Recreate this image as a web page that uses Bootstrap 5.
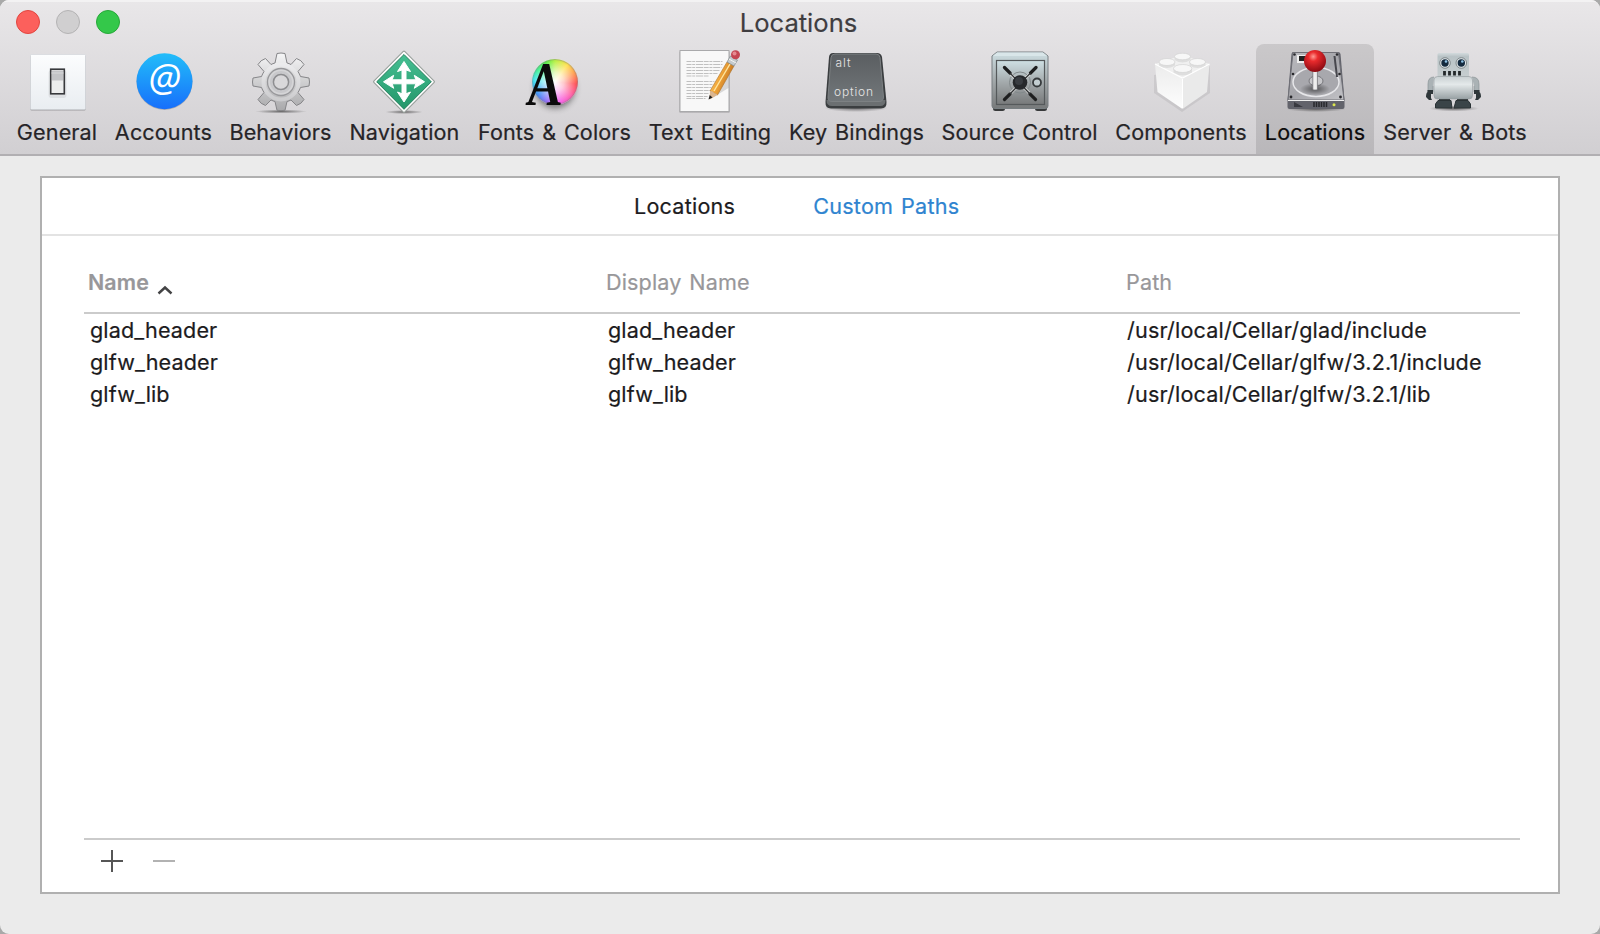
<!DOCTYPE html>
<html lang="en">
<head>
<meta charset="utf-8">
<title>Locations</title>
<link href="https://cdn.jsdelivr.net/npm/bootstrap@5.3.0/dist/css/bootstrap.min.css" rel="stylesheet">
<style>
body{background:#a9a9a9;font-family:Inter,"Liberation Sans",sans-serif;font-size:21.6px;line-height:32px;color:#262427;overflow:hidden;letter-spacing:.12px;word-spacing:1.6px;-webkit-text-stroke:.2px}
.window{height:934px;background:#ebebeb;border-radius:9px;overflow:hidden}
.titlebar{height:156px;background:linear-gradient(#e9e7e9,#d1cfd2);border-bottom:2px solid #b1afb2;box-shadow:inset 0 2px #f3f2f3}
.title-row{height:44px}
.light{width:24px;height:24px;border-radius:50%;border:1px solid}
.light-red{background:#fc605c;border-color:#e2453f}
.light-off{background:#d0cfd0;border-color:#b4b3b4}
.light-green{background:#34c84a;border-color:#27a839}
.win-title{font-size:25.6px;color:#3f3d40;padding:2px 3px 0 0;letter-spacing:0}
.tools{height:110px;display:grid;grid-template-columns:98px 115px 119px 129px 171px 140px 153px 173px 150px 118px 162px;padding-left:8px}
.tool{padding-top:6px;white-space:nowrap;border-radius:8px 8px 0 0}
.tool svg{width:64px;height:64px;overflow:visible;display:block}
.tool svg text{-webkit-text-stroke:0;letter-spacing:0}
.tool-label{line-height:36px}
.tool.active{background:linear-gradient(#cac8ca,#b9b7ba);color:#0c0b0c}
.wheel{width:64px;height:64px}
.wheel-disc{width:46px;height:46px;margin:9px 0 0 9px;border-radius:50%;background:radial-gradient(circle,#fff 0,#ffffffb0 28%,#fff0 68%),conic-gradient(#b4f03c,#ffe04a 35deg,#ff9a4a 65deg,#ff4a50 95deg,#ff5aa8 130deg,#f55af0 170deg,#8a6af8 205deg,#3a8cf8 235deg,#3ae4f0 275deg,#3cf090 305deg,#50ec40 335deg,#b4f03c);box-shadow:inset 0 0 1px 1px #8888,0 6px 6px -3px #0007}
.wheel-a{position:absolute;left:6px;top:2px;font:italic bold 62px/64px "Liberation Serif",serif;color:#0b0b0b;transform:scaleX(.84) skewX(4deg);transform-origin:0 100%;-webkit-text-stroke:0}
.panel{margin:20px 40px 0;height:718px;border:2px solid #b0b0b0;background:#fff}
.tabs-row{height:58px;border-bottom:2px solid #e3e3e3;padding-left:592px;gap:78px;color:#1d1c1e;letter-spacing:.22px}
.tab-on{color:#2f84d0}
.paths{margin:0 38px 0 42px}
.cols{display:grid;grid-template-columns:518px 520px 1fr;white-space:nowrap}
.heads{height:78px;padding:14px 0 0 4px;line-height:64px;color:#98979a;border-bottom:2px solid #cbcbcb}
.heads .sorted{font-weight:600;font-size:21.4px}
.rows{height:526px;padding:0 0 0 6px;color:#1c1b1d;border-bottom:2px solid #cbcbcb}
.rows .cols{height:32px}
.rows .cols>:last-child{letter-spacing:.17px;margin-left:-1px}
</style>
</head>
<body>
<svg width="0" height="0" class="position-absolute">
<defs>
<linearGradient id="plate" x2="0" y2="1"><stop stop-color="#fcfdfe"/><stop offset="1" stop-color="#e9edf1"/></linearGradient>
<linearGradient id="blue" x2="0" y2="1"><stop stop-color="#22bdf9"/><stop offset="1" stop-color="#176ffb"/></linearGradient>
<linearGradient id="steel" x2="0" y2="1"><stop stop-color="#f6f6f7"/><stop offset="1" stop-color="#a9a9ab"/></linearGradient>
<linearGradient id="green" x2="0" y2="1"><stop stop-color="#45bf92"/><stop offset="1" stop-color="#24966a"/></linearGradient>
<linearGradient id="safe" x2="0" y2="1"><stop stop-color="#cfe0e4"/><stop offset=".5" stop-color="#a3a9ab"/><stop offset="1" stop-color="#77797a"/></linearGradient>
<linearGradient id="key" x2="0" y2="1"><stop stop-color="#5a5e61"/><stop offset="1" stop-color="#72777a"/></linearGradient>
<linearGradient id="bot" x2="0" y2="1"><stop stop-color="#c9d0d2"/><stop offset=".35" stop-color="#e4e9ea"/><stop offset="1" stop-color="#98a1a4"/></linearGradient>
<linearGradient id="head" x2="0" y2="1"><stop stop-color="#d3dbdd"/><stop offset=".15" stop-color="#b9c3c6"/><stop offset="1" stop-color="#c6ced0"/></linearGradient>
<linearGradient id="disk" x2="1" y2="1"><stop stop-color="#bcbcc0"/><stop offset=".5" stop-color="#a5a5aa"/><stop offset="1" stop-color="#c2c2c6"/></linearGradient>
<radialGradient id="ball" cx=".42" cy=".3" r=".7"><stop stop-color="#ff9a93"/><stop offset=".3" stop-color="#ea2b2d"/><stop offset="1" stop-color="#8a0a12"/></radialGradient>
<radialGradient id="shade"><stop stop-color="#000" stop-opacity=".5"/><stop offset="1" stop-color="#000" stop-opacity="0"/></radialGradient>
<linearGradient id="pencil" x2="1" y2=".5"><stop stop-color="#ffd873"/><stop offset=".5" stop-color="#f2a73a"/><stop offset="1" stop-color="#b96a1b"/></linearGradient>
<linearGradient id="brickL" x2="0" y2="1"><stop stop-color="#ececec"/><stop offset="1" stop-color="#fdfdfd"/></linearGradient>
</defs>
</svg>
<div class="window d-flex flex-column">
  <header class="titlebar flex-shrink-0">
    <div class="title-row d-flex align-items-center position-relative">
      <div class="d-flex ps-3" style="gap:16px">
        <span class="light light-red"></span><span class="light light-off"></span><span class="light light-green"></span>
      </div>
      <div class="win-title position-absolute start-0 end-0 text-center">Locations</div>
    </div>
    <nav class="tools">
      <div class="tool d-flex flex-column align-items-center">
        <svg viewBox="0.5 0 64 64"><rect x="6" y="5.500" width="55" height="55" rx="1" fill="#0004"/><rect x="6" y="4.500" width="55" height="55" rx="1" fill="url(#plate)" stroke="#cfd2d6" stroke-width=".6"/><rect x="24" y="20" width="18" height="28" rx="3" fill="#0001"/><rect x="26.200" y="19.200" width="13.600" height="24.600" fill="#eceded" stroke="#38393c" stroke-width="1.600"/><rect x="27.500" y="20.500" width="11" height="10" fill="#c3c4c7"/><path d="M27 23h12" stroke="#d7d8da"/></svg>
        <div class="tool-label">General</div>
      </div>
      <div class="tool d-flex flex-column align-items-center">
        <svg viewBox="0 0 64 64"><circle cx="32.500" cy="32" r="28" fill="#0003"/><circle cx="32.500" cy="31.200" r="28" fill="url(#blue)"/><text x="32.500" y="42" text-anchor="middle" font-family="Open Sans" font-style="italic" font-size="38" fill="#fff">@</text></svg>
        <div class="tool-label">Accounts</div>
      </div>
      <div class="tool d-flex flex-column align-items-center">
        <svg viewBox="0 0 64 64"><ellipse cx="32" cy="61.500" rx="26" ry="2" fill="url(#shade)"/>
        <path fill="url(#steel)" stroke="#858588" stroke-width="1" stroke-linejoin="round" d="M26 13 28 3.500Q32 2.500 36 3.500L38 13Q40 13.500 42 14.500L47.500 8.500Q52.500 10 55 14.500L49 21.500Q50.500 24 51.500 26.500L60 28Q61 32 60 36L51.500 37.500Q50.500 40 49 42.500L55 49.500Q52.500 54 47.500 55.500L42 50Q40 51 38 51.500L36 60.300Q32 61 28 60.300L26 51.500Q24 51 22 50L16.500 55.500Q11.500 54 9 49.500L15 42.500Q13.500 40 12.500 37.500L4 36Q3 32 4 28L12.500 26.500Q13.500 24 15 21.500L9 14.500Q11.500 10 16.500 8.500L22 14.500Q24 13.500 26 13Z"/>
        <circle cx="32" cy="32" r="17.500" fill="none" stroke="#f4f4f5" stroke-width="4" opacity=".35"/><circle cx="32" cy="32" r="13.500" fill="#d5d5d7" stroke="#98989b" stroke-width="1.300"/><circle cx="32" cy="32" r="11" fill="#c8c8cb"/><circle cx="32" cy="32" r="7.600" fill="#d9d8da" stroke="#8d8d90" stroke-width="1.500"/></svg>
        <div class="tool-label">Behaviors</div>
      </div>
      <div class="tool d-flex flex-column align-items-center">
        <svg viewBox="1 0 64 64"><ellipse cx="32" cy="62" rx="19" ry="2" fill="url(#shade)"/><path d="M32 2 61.500 31.800 32 61.500 2.500 31.800Z" fill="#f7f8f7" stroke="#98a09c" stroke-width="3" stroke-linejoin="round"/><path d="M32 2.500 61 31.800 32 61 3 31.800Z" fill="#fff" stroke="#fff" stroke-width="1.500" stroke-linejoin="round"/><path d="M32 4.500 59.300 31.800 32 59.300 4.700 31.800Z" fill="url(#green)" stroke="#27815f"/><path d="M32 11.500 38.500 21.500 34 20V29.800H43.800L42.300 25.300 52.500 31.800 42.300 38.300 43.800 33.800H34V43.700L38.500 42 32 52 25.500 42 30 43.700V33.800H20.200L21.700 38.300 11.500 31.800 21.700 25.300 20.200 29.800H30V20L25.500 21.500Z" fill="#fff" stroke="#fff" stroke-linejoin="round"/></svg>
        <div class="tool-label">Navigation</div>
      </div>
      <div class="tool d-flex flex-column align-items-center">
        <div class="wheel position-relative overflow-visible d-flex"><div class="wheel-disc"></div><span class="wheel-a">A</span></div>
        <div class="tool-label">Fonts &amp; Colors</div>
      </div>
      <div class="tool d-flex flex-column align-items-center">
        <svg viewBox="0.5 0 64 64"><rect x="2" y="1.500" width="50" height="61" fill="#0004"/><rect x="2.500" y=".5" width="49" height="61" fill="#f8f8f8" stroke="#a9a9ab"/><path d="M9 11.500H45M9 14.500H45M9 17.500H44M9 20.500H42M9 23.500H40M9 26H31M9 31.500H37M9 34.500H35M9 37.500H34M9 40.500H33M9 43.500H31M9 46.500H30M9 48.500H28" stroke="#c0c0c0" stroke-width="1.200" stroke-dasharray="5 .7 3 .8 7 .7"/><path d="M33 49 51 38 51 26Z" fill="#0002"/><path d="M32.500 41 49.500 12 56.500 16 40 45Z" fill="url(#pencil)" stroke="#a9712c" stroke-width=".6"/><path d="M36.500 41 52.500 14" stroke="#ffe6a0" stroke-width="1.400"/><path d="M32.500 41Q36 41 36.500 43.200Q39 43 40 45L32 49.500Z" fill="#dbb690"/><path d="M32.200 45 31 49.500 35 47.500Z" fill="#222"/><path d="M49.500 12 53 6 60 10 56.500 16Z" fill="#c5cbce" stroke="#81898d" stroke-width=".7"/><path d="M51.500 9 58.500 13" stroke="#f5f6f6"/><circle cx="58" cy="4.800" r="4.500" fill="#c54652"/><circle cx="57" cy="3.500" r="2" fill="#e68a90"/></svg>
        <div class="tool-label">Text Editing</div>
      </div>
      <div class="tool d-flex flex-column align-items-center">
        <svg viewBox="1 0 64 64"><ellipse cx="32" cy="58" rx="32" ry="4" fill="url(#shade)"/><path d="M9 3H53Q57 3 58 7L62.500 52Q63 58.500 57 58.500H7Q1 58.500 1.500 52L5 7Q5.500 3 9 3Z" fill="#3b3e40"/><path d="M2.500 50H61.500Q61.500 56 56 56H8Q2.500 56 2.500 50Z" fill="#6b6f71"/><path d="M11 4H52Q55.500 4 56 7.500L59.500 47Q59.500 51.500 55 51.500H8Q3.500 51.500 4 47L7 7.500Q7.500 4 11 4Z" fill="url(#key)" stroke="#7d8183"/><g fill="#e6e6e6" font-family="Inter" font-weight="300" font-size="12"><text x="11.500" y="17" textLength="15">alt</text><text x="10" y="46" textLength="39">option</text></g></svg>
        <div class="tool-label">Key Bindings</div>
      </div>
      <div class="tool d-flex flex-column align-items-center">
        <svg viewBox="1 0 64 64"><rect x="6" y="55" width="12" height="6" rx="2.500" fill="#37393a"/><rect x="48" y="55" width="12" height="6" rx="2.500" fill="#37393a"/><path d="M10 2H56L61 6V56Q61 58.500 58 58.500H8Q5 58.500 5 56V6Z" fill="url(#safe)" stroke="#787f82"/><path d="M10 2.500H56L60 6H6Z" fill="#d9e6e9"/><rect x="9.500" y="10.500" width="48" height="44" fill="url(#safe)" stroke="#55595b" stroke-width="1.200"/><circle cx="33" cy="32.500" r="10.500" fill="none" stroke="#82898b"/><path d="M17.500 17.500 48.500 49.500M49 17.500 17.500 49.500" stroke="#ddd" stroke-width="2.800" stroke-linecap="round"/><path d="M17.500 17.500 23 23M49 17.500 43.500 23M48.500 49.500 43 44M17.500 49.500 23 44" stroke="#1d1e1f" stroke-width="3.200" stroke-linecap="round"/><path d="M23 23 43 44M43.500 23 23 44" stroke="#333638" stroke-width="1.300"/><circle cx="33" cy="32.500" r="7.300" fill="#26282b"/><circle cx="32" cy="31" r="4" fill="#393c41"/><circle cx="50" cy="32.500" r="4" fill="#c3ced1" stroke="#363a3c" stroke-width="1.800"/></svg>
        <div class="tool-label">Source Control</div>
      </div>
      <div class="tool d-flex flex-column align-items-center">
        <svg viewBox="0 0 64 64"><path d="M61 16 61 43 33 62 5 43 5 25Z" fill="#00000012"/><path d="M6 14 33.500 28V59L8.500 42Z" fill="url(#brickL)"/><path d="M60.500 14 33.500 28V59L58 42Z" fill="#eaeaea"/><path d="M6 14 33.500 5 60.500 14 33.500 28Z" fill="#f0f0f0"/><path d="M6 14 33.500 28 60.500 14" fill="none" stroke="#fff" stroke-width="1.200"/><path d="M33.500 29V58" stroke="#fff" stroke-width="1"/><g fill="#dedede"><path d="M25.500 6v4q8 5 16 0V6Z"/><path d="M10 11.500v4q8 5 16 0v-4ZM40.500 11.500v4q8 5 16 0v-4Z"/><path d="M24.500 18.500v4q9 6 18.500 0v-4Z"/></g><g fill="#f7f7f7" stroke="#d2d2d2" stroke-width=".7"><ellipse cx="33.500" cy="6.500" rx="8" ry="3.300"/><ellipse cx="18" cy="12" rx="8" ry="3.500"/><ellipse cx="48.500" cy="12" rx="8" ry="3.500"/><ellipse cx="33.700" cy="18.500" rx="9.200" ry="4"/></g></svg>
        <div class="tool-label">Components</div>
      </div>
      <div class="tool active d-flex flex-column align-items-center">
        <svg viewBox="0 0 64 64"><ellipse cx="33" cy="59" rx="30" ry="3" fill="url(#shade)"/><path d="M10 2H55Q57 2 57.500 4L61.500 50V57Q61.500 59 59.500 59H6.500Q4.500 59 4.500 57V50L8.500 4Q9 2 10 2Z" fill="#62636b"/><path d="M10 2.500H55.500L61 50H5Z" fill="url(#disk)" stroke="#707077"/><path d="M5 50.500H61" stroke="#eee" stroke-width="1.200"/><ellipse cx="33" cy="32" rx="23" ry="14.500" fill="#a8a8ad" stroke="#e6e6e9" stroke-width="1.500"/><ellipse cx="33" cy="31" rx="7" ry="5" fill="#c6c6c9" stroke="#77777c"/><ellipse cx="32" cy="39" rx="15" ry="6" fill="url(#shade)"/><path d="M51.500 6 54 27" stroke="#47474d" stroke-width="2"/><path d="M14 5h9v8h-9Z" fill="#eee"/><path d="M16 6h8v5h-8Z" fill="#222"/><g fill="#29292d"><circle cx="11.500" cy="4.500" r="1.300"/><circle cx="54" cy="4.500" r="1.300"/><circle cx="10" cy="24" r="1.300"/><circle cx="56.500" cy="24" r="1.300"/><circle cx="8" cy="47" r="1.400"/><circle cx="57.500" cy="47" r="1.400"/></g><path d="M11 52 20 57H11Z" fill="#393a40"/><path d="M31 52V57M33.500 52V57M36 52V57M38.500 52V57M41 52V57M43.500 52V57" stroke="#28292d" stroke-width="1.500"/><circle cx="51" cy="54.800" r="1.500" fill="#dce74e"/><rect x="29.800" y="20" width="4.600" height="20" rx="1" fill="#eee" stroke="#747478" stroke-width=".8"/><circle cx="32" cy="11" r="11" fill="url(#ball)"/></svg>
        <div class="tool-label">Locations</div>
      </div>
      <div class="tool d-flex flex-column align-items-center">
        <svg viewBox="1 0 64 64"><ellipse cx="32" cy="58.500" rx="25" ry="3" fill="url(#shade)"/><path d="M12 27Q6 27 6 34V42H11V36M50 27Q57 27 57 34V42H52V36" fill="#aab2b5" stroke="#8b9497" stroke-width=".7"/><path d="M5.500 40H11V44H9V48L10 50H7L4 47Q4 43 5.500 42ZM57.500 40H52V44H54V48L53 50H56L59 47Q59 43 57.500 42Z" fill="#30383b"/><rect x="15.500" y="3" width="31.500" height="24" rx="1.500" fill="url(#head)"/><path d="M22.500 21V25.500M27.500 21V25.500M32.500 21V25.500M37.500 21V25.500" stroke="#23282a" stroke-width="2.800"/><g fill="#dfe5e7" stroke="#7f888b"><circle cx="23" cy="13" r="5.300"/><circle cx="39.300" cy="13" r="5.300"/></g><g fill="#142a3e"><circle cx="23" cy="13" r="3.700"/><circle cx="39.300" cy="13" r="3.700"/></g><g fill="#8fc3e5"><circle cx="24" cy="11.500" r="1.300"/><circle cx="40.300" cy="11.500" r="1.300"/></g><path d="M17 48.500H28V51H17ZM35 48.500H46V51H35Z" fill="#1e2426"/><rect x="12" y="26.500" width="38.500" height="22.500" rx="3.500" fill="url(#bot)" stroke="#929b9e" stroke-width=".6"/><path d="M16 50.500H29L30 58H13.500V54ZM34 50.500H46L48.500 54V58H32Z" fill="#3a4448" stroke="#2a3235" stroke-linejoin="round"/></svg>
        <div class="tool-label">Server &amp; Bots</div>
      </div>
    </nav>
  </header>
  <main class="panel">
    <div class="tabs-row d-flex align-items-center"><span>Locations</span><span class="tab-on">Custom Paths</span></div>
    <section class="paths">
      <div class="cols heads">
        <div class="d-flex align-items-center"><span class="sorted">Name</span><svg class="ms-2 mt-3" width="16" height="10" viewBox="0 0 16 10"><path d="M1.500 8.500 8 2.500 14.500 8.500" fill="none" stroke="#434345" stroke-width="2.400"/></svg></div>
        <div>Display Name</div><div>Path</div>
      </div>
      <div class="rows">
        <div class="cols"><div>glad_header</div><div>glad_header</div><div>/usr/local/Cellar/glad/include</div></div>
        <div class="cols"><div>glfw_header</div><div>glfw_header</div><div>/usr/local/Cellar/glfw/3.2.1/include</div></div>
        <div class="cols"><div>glfw_lib</div><div>glfw_lib</div><div>/usr/local/Cellar/glfw/3.2.1/lib</div></div>
      </div>
      <div class="d-flex" style="padding:10px 0 0 17px;gap:30px">
        <svg width="22" height="22"><path d="M0 11H22M11 0V22" stroke="#565656" stroke-width="2"/></svg>
        <svg width="22" height="22"><path d="M0 11H22" stroke="#b2b2b2" stroke-width="2"/></svg>
      </div>
    </section>
  </main>
</div>
<script src="https://cdn.jsdelivr.net/npm/bootstrap@5.3.0/dist/js/bootstrap.bundle.min.js"></script>
</body>
</html>
